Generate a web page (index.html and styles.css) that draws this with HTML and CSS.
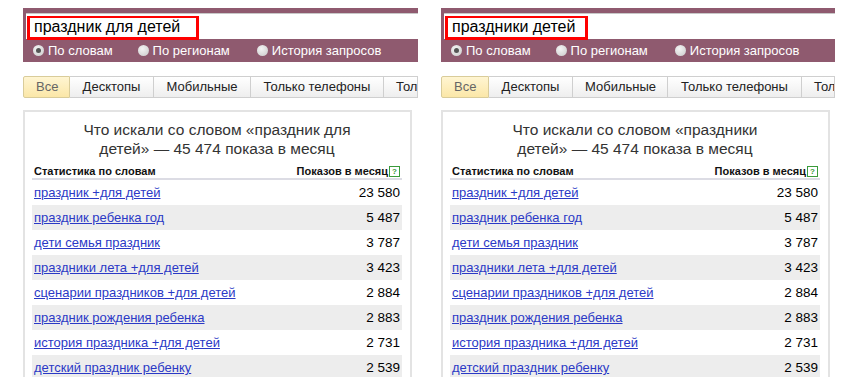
FILE: index.html
```html
<!DOCTYPE html>
<html>
	<head>
		<meta charset="utf-8">
		<link rel="stylesheet" href="styles.css">
	</head>
	<body>
		<div class="page">
			<div class="panel">
				<div class="search">
					<div class="field"><span class="query">праздник для детей</span></div>
					<div class="modes">
						<span class="mode"><i class="radio on"></i>По словам</span>
						<span class="mode"><i class="radio"></i>По регионам</span>
						<span class="mode"><i class="radio"></i>История запросов</span>
					</div>
				</div>
				<div class="tabs">
					<span class="tab active">Все</span>
					<span class="tab w-desk">Десктопы</span>
					<span class="tab w-mob">Мобильные</span>
					<span class="tab w-phone">Только телефоны</span>
					<span class="tab last">Только планшеты</span>
				</div>
				<div class="card">
					<h1 class="title">Что искали со словом «праздник для<br>детей» — 45 474 показа в месяц</h1>
					<table class="stats">
						<tr class="head"><th>Статистика по словам</th><th class="num">Показов в месяц <span class="help">?</span></th></tr>
						<tr><td><a href="#">праздник +для детей</a></td><td class="num">23 580</td></tr>
						<tr class="odd"><td><a href="#">праздник ребенка год</a></td><td class="num">5 487</td></tr>
						<tr><td><a href="#">дети семья праздник</a></td><td class="num">3 787</td></tr>
						<tr class="odd"><td><a href="#">праздники лета +для детей</a></td><td class="num">3 423</td></tr>
						<tr><td><a href="#">сценарии праздников +для детей</a></td><td class="num">2 884</td></tr>
						<tr class="odd"><td><a href="#">праздник рождения ребенка</a></td><td class="num">2 883</td></tr>
						<tr><td><a href="#">история праздника +для детей</a></td><td class="num">2 731</td></tr>
						<tr class="odd"><td><a href="#">детский праздник ребенку</a></td><td class="num">2 539</td></tr>
					</table>
				</div>
			</div>
			<div class="panel second">
				<div class="search">
					<div class="field"><span class="query">праздники детей</span></div>
					<div class="modes">
						<span class="mode"><i class="radio on"></i>По словам</span>
						<span class="mode"><i class="radio"></i>По регионам</span>
						<span class="mode"><i class="radio"></i>История запросов</span>
					</div>
				</div>
				<div class="tabs">
					<span class="tab active">Все</span>
					<span class="tab w-desk">Десктопы</span>
					<span class="tab w-mob">Мобильные</span>
					<span class="tab w-phone">Только телефоны</span>
					<span class="tab last">Только планшеты</span>
				</div>
				<div class="card">
					<h1 class="title">Что искали со словом «праздники<br>детей» — 45 474 показа в месяц</h1>
					<table class="stats">
						<tr class="head"><th>Статистика по словам</th><th class="num">Показов в месяц <span class="help">?</span></th></tr>
						<tr><td><a href="#">праздник +для детей</a></td><td class="num">23 580</td></tr>
						<tr class="odd"><td><a href="#">праздник ребенка год</a></td><td class="num">5 487</td></tr>
						<tr><td><a href="#">дети семья праздник</a></td><td class="num">3 787</td></tr>
						<tr class="odd"><td><a href="#">праздники лета +для детей</a></td><td class="num">3 423</td></tr>
						<tr><td><a href="#">сценарии праздников +для детей</a></td><td class="num">2 884</td></tr>
						<tr class="odd"><td><a href="#">праздник рождения ребенка</a></td><td class="num">2 883</td></tr>
						<tr><td><a href="#">история праздника +для детей</a></td><td class="num">2 731</td></tr>
						<tr class="odd"><td><a href="#">детский праздник ребенку</a></td><td class="num">2 539</td></tr>
					</table>
				</div>
			</div>
		</div>
	</body>
</html>
```

FILE: styles.css
```css
body {
	margin: 0;
	background: #fff;
	font-family: "Liberation Sans", Arial, sans-serif;
	color: #000;
}
.page {
	display: flex;
	gap: 23px;
	height: 369px;
	padding: 8px 0 0 23px;
	overflow: hidden;
}
.panel {
	width: 395px;
	overflow: hidden;
	flex: none;
}
.panel.second {
	width: 394px;
}
.search {
	height: 54px;
	padding: 5px 0 0 3px;
	box-sizing: border-box;
	background: #8f5a6f;
}
.field {
	width: 600px;
	height: 26px;
	background: #fff;
	border-top: 1px solid #c8c8c8;
	box-sizing: border-box;
	padding: 3px 0 0 1px;
}
.query {
	display: inline-block;
	height: 19px;
	line-height: 18px;
	padding: 0 16px 0 4px;
	border: 3px solid #f00;
	border-top-width: 2px;
	font-size: 16px;
	color: #000;
	margin-top: -1px;
}
.second .query {
	padding-right: 10px;
}
.modes {
	display: flex;
	align-items: center;
	height: 22px;
	padding-left: 7px;
	font-size: 13px;
	color: #fff;
}
.mode {
	display: flex;
	align-items: center;
	margin-right: 25px;
}
.mode:nth-child(2) {
	margin-right: 27px;
}
.radio {
	display: inline-block;
	width: 11px;
	height: 11px;
	border-radius: 50%;
	background: radial-gradient(circle at 40% 35%, #f4f4f4, #c9c9c9);
	margin-right: 4px;
	position: relative;
}
.radio.on::after {
	content: "";
	position: absolute;
	left: 3px;
	top: 3px;
	width: 5px;
	height: 5px;
	border-radius: 50%;
	background: #555;
}
.tabs {
	display: flex;
	margin-top: 14px;
	height: 22px;
	white-space: nowrap;
	overflow: hidden;
}
.tab {
	flex: none;
	height: 22px;
	box-sizing: border-box;
	line-height: 20px;
	padding: 0 12px;
	font-size: 13px;
	color: #222;
	text-align: center;
	border: 1px solid #cfcfcf;
	border-left: none;
	background: linear-gradient(#fff, #eee);
}
.tab.last {
	flex: 1 1 auto;
	min-width: 0;
	overflow: hidden;
	text-align: left;
}
.tab.active {
	width: 47px;
	border-left: 1px solid #d9cc9a;
	border-color: #d9cc9a;
	background: linear-gradient(#fff5d2, #fbe7a8);
	color: #666;
	border-radius: 2px 0 0 2px;
}
.second .tab.active {
	width: 48px;
}
.w-desk { width: 84px; }
.w-mob { width: 97px; }
.second .w-mob { width: 95px; }
.w-phone { width: 133px; }
.second .w-phone { width: 134px; }
.card {
	width: 389px;
	margin-top: 12px;
	height: 300px;
	box-sizing: border-box;
	border: 2px solid #e3e3e3;
	border-bottom: none;
	padding: 8px 8px 0 7px;
}
.title {
	margin: 0 0 4px;
	font-size: 15.5px;
	font-weight: normal;
	line-height: 19px;
	text-align: center;
	color: #333;
}
.stats {
	width: 100%;
	border-collapse: collapse;
}
.stats th {
	text-align: left;
	font-size: 11px;
	font-weight: bold;
	height: 15px;
	padding: 1px 2px 0;
	border-bottom: 2px solid #dcdce4;
	color: #111;
}
.stats td {
	height: 25px;
	padding: 0 2px;
	font-size: 13px;
}
.stats .num {
	text-align: right;
}
.stats td.num {
	font-size: 13.5px;
	color: #000;
}
.stats tr.odd td {
	background: #ededed;
}
.stats a {
	color: #2b39c6;
	text-decoration: underline;
}
.help {
	display: inline-block;
	width: 9px;
	height: 9px;
	line-height: 9px;
	border: 1px solid #3a9b3a;
	color: #3a9b3a;
	font-size: 8px;
	text-align: center;
	vertical-align: 1px;
	margin-left: -2px;
}
```
